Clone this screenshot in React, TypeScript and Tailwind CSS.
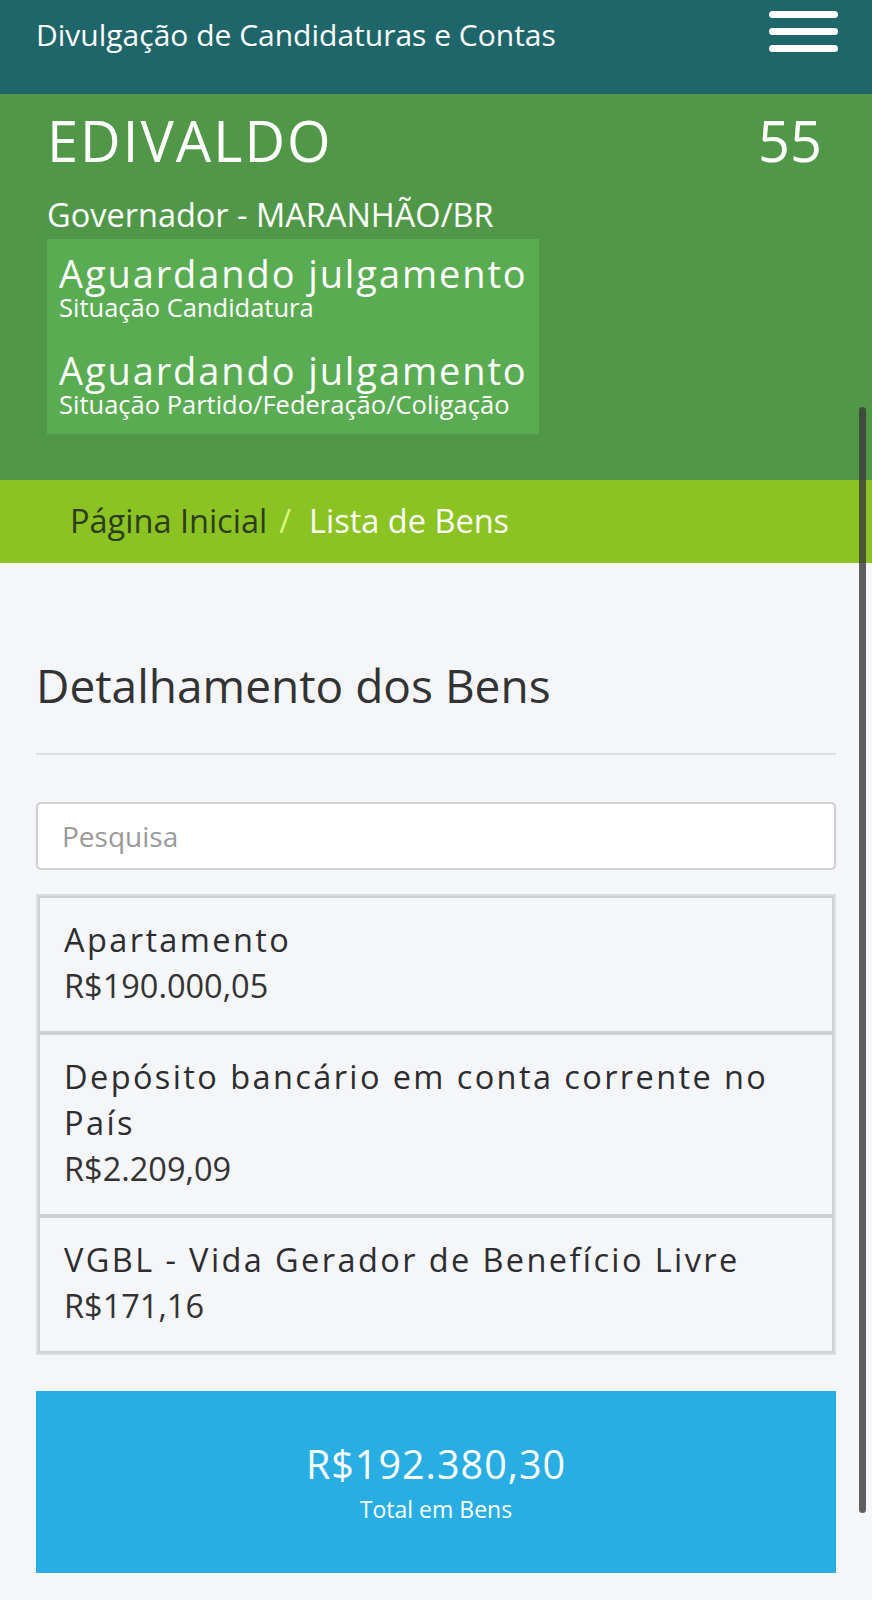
import React from "react";

const list = [
  { name: "Apartamento", value: "R$190.000,05" },
  { name: "Depósito bancário em conta corrente no País", value: "R$2.209,09" },
  { name: "VGBL - Vida Gerador de Benefício Livre", value: "R$171,16" },
];

export default function App() {
  return (
    <div className="relative w-[872px] min-h-[1600px] bg-[#f5f6fa] font-['Open_Sans',sans-serif]">
      {/* Top header */}
      <header className="h-[94px] bg-[#1f666a] flex items-start justify-between pl-[36px] pr-[34px]">
        <h1 className="mt-[16px] text-[30px] leading-[38px] text-white">Divulgação de Candidaturas e Contas</h1>
        <button className="mt-[11px] w-[69px] flex flex-col gap-[10px]" aria-label="menu">
          <span className="block h-[7px] w-full rounded-full bg-white" />
          <span className="block h-[7px] w-full rounded-full bg-white" />
          <span className="block h-[7px] w-full rounded-full bg-white" />
        </button>
      </header>

      {/* Candidate block */}
      <section className="h-[386px] bg-[#509848] pl-[47px] pr-[50px] pt-[8px]">
        <div className="flex items-start justify-between text-white">
          <span className="text-[56px] leading-[76px] tracking-[2px]">EDIVALDO</span>
          <span className="text-[56px] leading-[76px]">55</span>
        </div>
        <div className="mt-[17px] text-[32.5px] leading-[40px] text-white">Governador - MARANHÃO/BR</div>
        <div className="mt-[4px] w-[492px] h-[195px] overflow-hidden bg-[#5aac52] px-[12px] pt-[13px] text-white">
          <div className="text-[38px] leading-[42px] tracking-[1.9px] whitespace-nowrap">Aguardando julgamento</div>
          <div className="text-[25.5px] leading-[26px] whitespace-nowrap">Situação Candidatura</div>
          <div className="mt-[29px] text-[38px] leading-[42px] tracking-[1.9px] whitespace-nowrap">Aguardando julgamento</div>
          <div className="text-[25.5px] leading-[26px] whitespace-nowrap">Situação Partido/Federação/Coligação</div>
        </div>
      </section>

      {/* Breadcrumb */}
      <nav className="h-[83px] bg-[#8bc322] flex items-center pl-[70px] text-[32.5px]">
        <span className="text-[#2c3d1f]">Página Inicial</span>
        <span className="ml-[12px] mr-[18px] text-[#d4f77c]">/</span>
        <span className="text-white">Lista de Bens</span>
      </nav>

      {/* Content */}
      <main className="px-[36px] pt-[94px] pb-[26px]">
        <h2 className="text-[46px] leading-[56px] text-[#333]">Detalhamento dos Bens</h2>
        <hr className="mt-[40px] border-0 h-[2px] bg-[#dedfe3]" />
        <input
          className="mt-[47px] block w-full h-[68px] rounded-[5px] border-2 border-[#d0d0d2] bg-white px-[24px] text-[28px] text-[#333] placeholder:text-[#9a9a9a] outline-none"
          placeholder="Pesquisa"
        />
        <div className="mt-[24px] border-2 border-[#dcdde0] bg-[#f5f6fa]">
          {list.map((it, i) => (
            <div key={i} className="border-2 border-[#cfd0d3] pl-[24px] pr-[20px] pt-[19px] pb-[22px]">
              <div className="text-[32.5px] leading-[46px] tracking-[2.4px] text-[#2d2d2f]">{it.name}</div>
              <div className="text-[32.5px] leading-[46px] text-[#333]">{it.value}</div>
            </div>
          ))}
        </div>
        <div className="mt-[36px] h-[182px] bg-[#28aee3] flex flex-col items-center pt-[48px] text-white">
          <div className="text-[39.5px] leading-[50px] tracking-[1px]">R$192.380,30</div>
          <div className="mt-[6px] text-[23px] leading-[28px]">Total em Bens</div>
        </div>
      </main>

      {/* overlay scrollbar */}
      <div className="absolute left-[859px] top-[407px] w-[7px] h-[1106px] rounded-full bg-[#3a3a3a] opacity-80" />
    </div>
  );
}
